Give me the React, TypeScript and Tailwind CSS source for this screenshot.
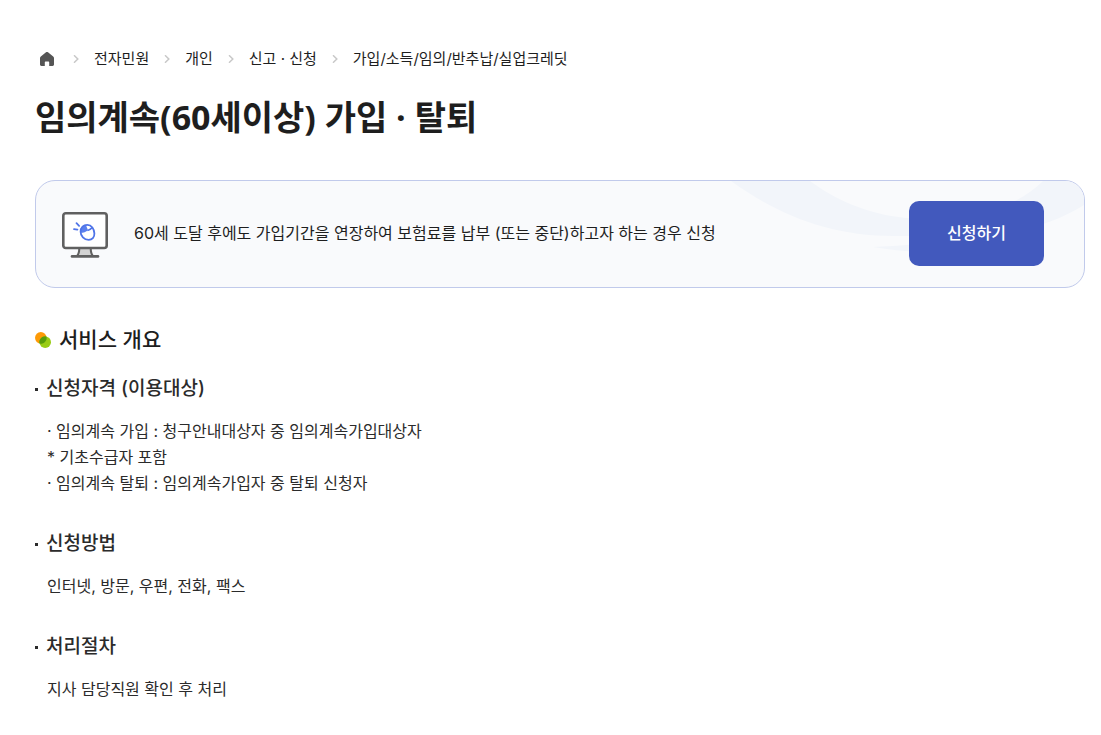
import { Fragment, type ReactNode } from 'react';

const crumbs = ['전자민원', '개인', '신고 · 신청', '가입/소득/임의/반추납/실업크레딧'];

function HomeIcon() {
  return (
    <svg width="14" height="14" viewBox="0 0 14 14" aria-hidden="true">
      <path
        d="M6 .3a1.600 1.600 0 0 1 2 0l5.200 4.100c.5.4.8 1 .8 1.600v6.600c0 .8-.6 1.400-1.400 1.400H9.200v-3.400c0-.6-.4-1-1-1H5.800c-.6 0-1 .4-1 1V14H1.400C.6 14 0 13.400 0 12.600V6c0-.6.300-1.200.800-1.600z"
        fill="#555"
      />
    </svg>
  );
}

function Chevron() {
  return (
    <svg width="6" height="8" viewBox="0 0 6 8" fill="none" stroke="#c8c8c8" strokeWidth="1.500" aria-hidden="true">
      <path d="M1 .3 4.800 4 1 7.700" />
    </svg>
  );
}

function MonitorIcon() {
  return (
    <svg className="shrink-0" width="46" height="50" viewBox="0 -4 46 50" fill="none" aria-hidden="true">
      <path d="M16.500 36h13l1.500 7.500H15z" fill="#d3d3d3" />
      <path d="M17.300 36c0 4-.5 6-2 7.500M28.700 36c0 4 .5 6 2 7.500" stroke="#606060" strokeWidth="2" />
      <rect x="1.300" y="1.300" width="43.400" height="34.700" rx="2.500" fill="#fff" stroke="#606060" strokeWidth="2.600" />
      <path d="M10 44.400h26" stroke="#606060" strokeWidth="2.600" strokeLinecap="round" />
      <path d="M14.500 11.200l2.600 2.600M12 17.100l3.400.5" stroke="#4f74e8" strokeWidth="1.800" strokeLinecap="round" />
      <path d="M18.600 20.800c-.8-4.400 1.400-7.400 5.200-8l2.200 5.400c-2 1.600-4.500 2.600-7.400 2.600z" fill="#5b80ee" />
      <path
        d="M18.600 19.800c0-4.400 2.900-7 6.700-7 4.300 0 6.900 4.500 7.100 8.600.2 4-2.300 6.500-5.700 6.500-4.700 0-8.100-3.900-8.100-8.100z"
        stroke="#4f74e8"
        strokeWidth="1.800"
      />
      <path d="M25.500 18.600c2-.8 3.600-1.800 5-3.200" stroke="#4f74e8" strokeWidth="1.500" />
    </svg>
  );
}

function Section({ title, children }: { title: string; children: ReactNode }) {
  return (
    <section>
      <h3 className="flex items-center gap-2 text-[19px] leading-7 font-medium text-[#2b2b2b]">
        <span className="h-[3px] w-[3px] bg-[#2b2b2b]" />
        {title}
      </h3>
      <div className="mt-[15px] pl-3 text-base leading-[26px] text-[#2b2b2b]">{children}</div>
    </section>
  );
}

export default function App() {
  return (
    <main className="px-4 pt-[45px] pb-8 pl-[35px] font-['Inter','Noto_Sans_CJK_KR',sans-serif] text-[#1e1e1e]">
      <nav aria-label="breadcrumb" className="flex h-7 items-center gap-[15px] pl-[5px] text-[15px] whitespace-nowrap">
        <a href="#home" aria-label="홈" className="mr-1">
          <HomeIcon />
        </a>
        {crumbs.map((crumb) => (
          <Fragment key={crumb}>
            <Chevron />
            <a href="#crumb">{crumb}</a>
          </Fragment>
        ))}
      </nav>

      <h1 className="mt-[19px] font-['Open_Sans','Noto_Sans_CJK_KR',sans-serif] text-[34px] leading-[50px] font-bold">
        임의계속(60세이상) 가입 · 탈퇴
      </h1>

      <div className="relative mt-[38px] flex min-h-[108px] items-center gap-[26px] overflow-hidden rounded-[20px] border border-[#c1caeb] bg-[#f9fafc] pr-10 pb-0.5 pl-[26px]">
        <svg className="absolute top-0 right-0" width="360" height="106" viewBox="0 0 360 106" aria-hidden="true">
          <path d="M7 0H86c24 18 56 33 96 37 58 5 108-8 137-37h41v24c-60 37-120 31-190 31C106 55 54 34 7 0z" fill="#f2f5fa" />
          <path d="M149 66c24-1 58-3 90-10v14c-35 3-65 0-90-4z" fill="#f2f5fa" />
        </svg>
        <MonitorIcon />
        <p className="relative flex-1 text-base">60세 도달 후에도 가입기간을 연장하여 보험료를 납부 (또는 중단)하고자 하는 경우 신청</p>
        <button type="button" className="relative h-[65px] w-[135px] rounded-[10px] bg-[#4259bd] text-base font-medium text-white">
          신청하기
        </button>
      </div>

      <h2 className="mt-9 flex items-center gap-2 text-[21px] leading-8 font-medium">
        <svg width="16" height="16" viewBox="0 0 16 16" aria-hidden="true">
          <circle cx="5.800" cy="5.800" r="5.800" fill="#fd9a06" />
          <circle cx="10.200" cy="10.200" r="5.800" fill="#99cc14" />
          <path d="M4.500 11.500A5.800 5.800 0 0 1 11.500 4.500A5.800 5.800 0 0 1 4.500 11.500z" fill="#589d09" />
        </svg>
        서비스 개요
      </h2>

      <div className="mt-[19px] flex flex-col gap-[34px]">
        <Section title="신청자격 (이용대상)">
          <p>· 임의계속 가입 : 청구안내대상자 중 임의계속가입대상자</p>
          <p>* 기초수급자 포함</p>
          <p>· 임의계속 탈퇴 : 임의계속가입자 중 탈퇴 신청자</p>
        </Section>
        <Section title="신청방법">
          <p>인터넷, 방문, 우편, 전화, 팩스</p>
        </Section>
        <Section title="처리절차">
          <p>지사 담당직원 확인 후 처리</p>
        </Section>
      </div>
    </main>
  );
}
